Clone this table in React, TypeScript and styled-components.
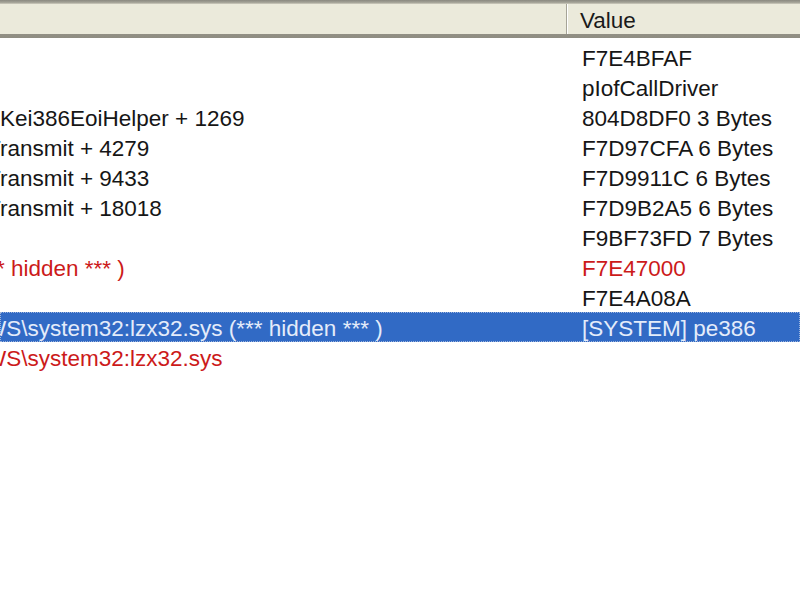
import React from 'react'
import styled, { createGlobalStyle } from 'styled-components';

const GlobalStyle = createGlobalStyle`
  html, body {
    margin: 0;
    padding: 0;
    background: #ffffff;
    overflow: hidden;
  }
  body {
    font-family: "Liberation Sans", Arial, sans-serif;
  }
`;

const ListView = styled.div`
    width: 800px;
    height: 600px;
    background: #ffffff;
    overflow: hidden;
    display: flex;
    flex-direction: column;
`;

const TopEdge = styled.div`
    height: 4px;
    background: linear-gradient(#8a8980, #a3a296 60%, #d0cec0);
`;

const Header = styled.div`
    display: grid;
    grid-template-columns: 566px 1fr;
    height: 30px;
    background: #ebeadb;
    border-bottom: 4px solid transparent;
    border-image: linear-gradient(#e2e0d0, #cbc8b8 40%, #a7a597 75%, #8f8d82) 1;
`;

interface HeaderCellProps {
    divider?: boolean;
}
const HeaderCell = styled.div<HeaderCellProps>`
    display: flex;
    align-items: center;
    padding: 4px 0 0 13px;
    font-size: 22.5px;
    color: #1a1a1a;
    border-left: ${props => props.divider ? '1px solid #a6a497' : '0'};
    box-shadow: ${props => props.divider ? 'inset 1px 0 0 #ffffff' : 'none'};
`;

const Rows = styled.div`
    padding-top: 4px;
    display: flex;
    flex-direction: column;
`;

type RowProps = {
    selected?: boolean;
}
const Row = styled.div<RowProps>`
    display: grid;
    grid-template-columns: 567px 1fr;
    height: 30px;
    align-items: center;
    background: ${props => props.selected ? '#316ac5' : 'transparent'};
    outline: ${props => props.selected ? '1px dotted #9db4dc' : 'none'};
    outline-offset: -1px;
`;

type CellProps = {
    tone: 'normal' | 'red' | 'selected';
    offset?: number;
}
const toneColor = {
    normal: '#161616',
    red: '#cc1a1a',
    selected: '#e4ecfa',
};

const NameCell = styled.div`
    overflow: hidden;
    white-space: nowrap;
    padding-top: 3px;
`;

const NameText = styled.span<CellProps>`
    display: inline-block;
    margin-left: ${props => props.offset || 0}px;
    font-size: 22.5px;
    color: ${props => toneColor[props.tone]};
`;

const ValueCell = styled.div<CellProps>`
    padding: 3px 0 0 15px;
    white-space: nowrap;
    overflow: hidden;
    font-size: 22.5px;
    color: ${props => toneColor[props.tone]};
`;

interface Entry {
    name: string;
    offset?: number;
    value: string;
    nameTone?: 'normal' | 'red';
    valueTone?: 'normal' | 'red';
    selected?: boolean;
}

// the name column is scrolled to the right, so every name starts off screen
const entries: Entry[] = [
    { name: '', value: 'F7E4BFAF' },
    { name: '', value: 'pIofCallDriver' },
    { name: 'Kei386EoiHelper + 1269', value: '804D8DF0 3 Bytes' },
    { name: 'Transmit + 4279', offset: -13, value: 'F7D97CFA 6 Bytes' },
    { name: 'Transmit + 9433', offset: -13, value: 'F7D9911C 6 Bytes' },
    { name: 'Transmit + 18018', offset: -13, value: 'F7D9B2A5 6 Bytes' },
    { name: '', value: 'F9BF73FD 7 Bytes' },
    { name: '(*** hidden *** )', offset: -29, value: 'F7E47000', nameTone: 'red', valueTone: 'red' },
    { name: '', value: 'F7E4A08A' },
    { name: 'WS\\system32:lzx32.sys (*** hidden *** )', offset: -15, value: '[SYSTEM] pe386', selected: true },
    { name: 'WS\\system32:lzx32.sys', offset: -15, value: '', nameTone: 'red' },
];

const App = () => {
    return (
        <>
            <GlobalStyle />
            <ListView>
                <TopEdge />
                <Header>
                    <HeaderCell />
                    <HeaderCell divider>Value</HeaderCell>
                </Header>
                <Rows>
                    {entries.map((e, i) => (
                        <Row key={i} selected={e.selected}>
                            <NameCell>
                                <NameText
                                    offset={e.offset}
                                    tone={e.selected ? 'selected' : (e.nameTone || 'normal')}
                                >
                                    {e.name}
                                </NameText>
                            </NameCell>
                            <ValueCell tone={e.selected ? 'selected' : (e.valueTone || 'normal')}>
                                {e.value}
                            </ValueCell>
                        </Row>
                    ))}
                </Rows>
            </ListView>
        </>
    )
}

export default App;
